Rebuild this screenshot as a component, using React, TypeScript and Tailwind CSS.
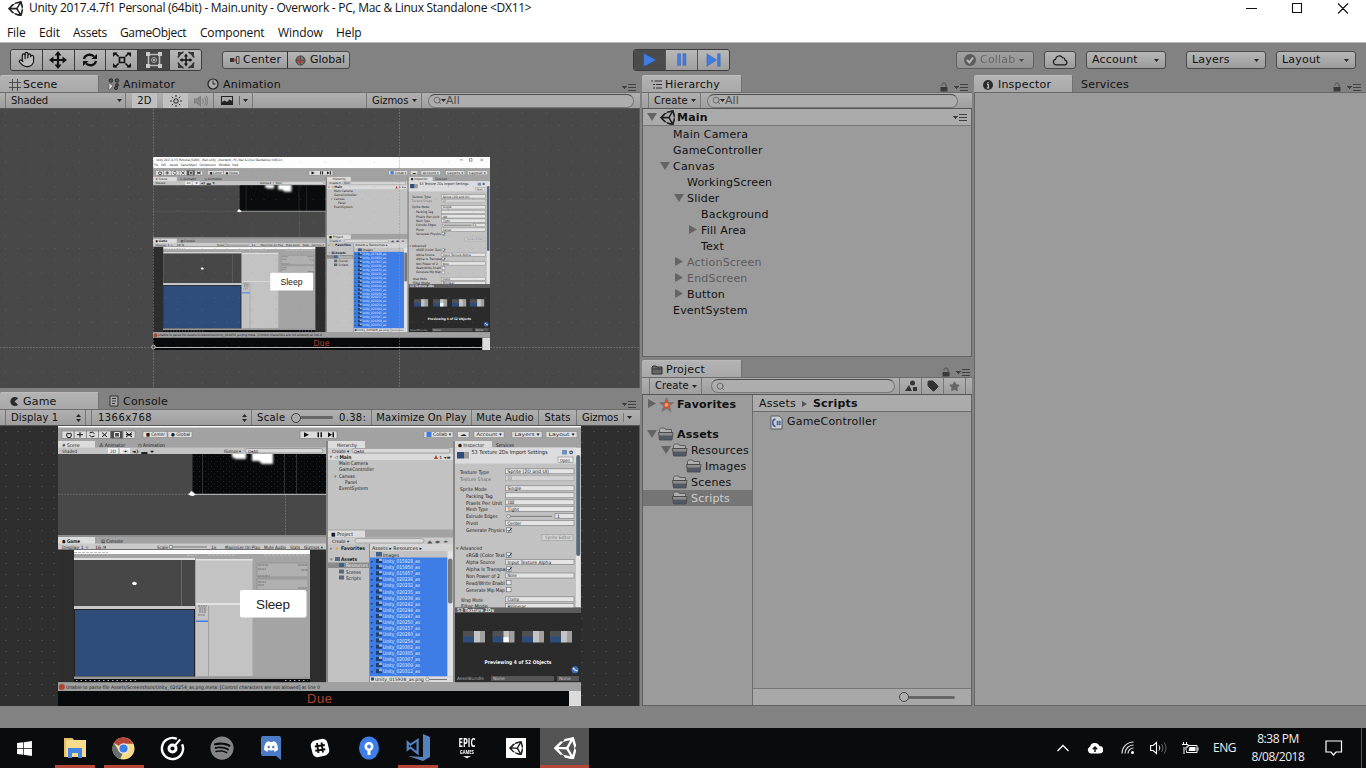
import React from "react";
import { DiUnitySmall } from "react-icons/di";
import { FaWindows, FaSpotify, FaDiscord } from "react-icons/fa";
import { Hand, Cloud, Tag, Star, Search } from "lucide-react";

const mini = { fontFamily: '"DejaVu Sans", sans-serif', letterSpacing: 0 };
const arial = { fontFamily: '"Liberation Sans", sans-serif', letterSpacing: 0 };

/* ---------- picture shown by both the Scene and the Game view ---------- */

type LabelProps = { x: number; y: number; t: string; s?: number; c?: string; w?: number; bold?: boolean };

function L({ x, y, t, s = 5, c = "#1b1b1b", w, bold }: LabelProps) {
  return (
    <text x={x} y={y} fontSize={s} fill={c} fontWeight={bold ? 700 : 400} textLength={w} lengthAdjust="spacingAndGlyphs" dominantBaseline="central" style={mini}>
      {t}
    </text>
  );
}

function R({ x, y, w, h, f, s, r }: { x: number; y: number; w: number; h: number; f: string; s?: string; r?: number }) {
  return <rect x={x} y={y} width={w} height={h} fill={f} stroke={s} strokeWidth={s ? 0.6 : 0} rx={r} />;
}

const files = ["015928", "015950", "015957", "020236", "020232", "020235", "020239", "020242", "020244", "020247", "020250", "020257", "020260", "020254", "020302", "020305", "020307", "020309", "020312"];

const fields: { t: string; y: number; x: number; v?: string; check?: boolean; on?: boolean; dim?: boolean }[] = [
  { t: "Texture Type", y: 471.5, x: 460, v: "Sprite (2D and UI)" },
  { t: "Texture Shape", y: 478.5, x: 460, v: "2D", dim: true },
  { t: "Sprite Mode", y: 488.5, x: 460, v: "Single" },
  { t: "Packing Tag", y: 495.5, x: 466, v: "" },
  { t: "Pixels Per Unit", y: 502.5, x: 466, v: "100" },
  { t: "Mesh Type", y: 509, x: 466, v: "Tight" },
  { t: "Extrude Edges", y: 516, x: 466 },
  { t: "Pivot", y: 523, x: 466, v: "Center" },
  { t: "Generate Physics", y: 530, x: 466, check: true, on: true },
  { t: "sRGB (Color Text", y: 555, x: 466, check: true, on: true },
  { t: "Alpha Source", y: 562, x: 466, v: "Input Texture Alpha" },
  { t: "Alpha Is Transpar", y: 569, x: 466, check: true, on: true },
  { t: "Non Power of 2", y: 575.7, x: 466, v: "None" },
  { t: "Read/Write Enabl", y: 582.5, x: 466, check: true },
  { t: "Generate Mip Map", y: 589.5, x: 466, check: true },
  { t: "Wrap Mode", y: 599.5, x: 461, v: "Clamp" },
  { t: "Filter Mode", y: 606, x: 461, v: "Bilinear" },
];

const miniMenu: [string, number, number][] = [["File", 60, 6], ["Edit", 71, 7], ["Assets", 84, 13], ["GameObject", 101, 25], ["Component", 130, 25], ["Window", 160, 17], ["Help", 181, 9]];

function Picture({ viewBox, className, titled }: { viewBox: string; className: string; titled?: boolean }) {
  return (
    <svg viewBox={viewBox} preserveAspectRatio="none" className={className}>
      <defs>
        <filter id="soft" x="-20%" y="-20%" width="140%" height="140%">
          <feGaussianBlur stdDeviation="1.3" />
        </filter>
        <pattern id="dots" width="6" height="5" patternUnits="userSpaceOnUse">
          <rect x="1" y="1" width="0.8" height="0.8" fill="#33373b" />
          <rect x="4" y="3.5" width="0.8" height="0.8" fill="#282b2e" />
        </pattern>
        <clipPath id="world"><rect x="193" y="454" width="133" height="40" /></clipPath>
      </defs>
      <R x={58} y={410} w={523} h={18} f="#fdfdfd" />
      {titled && (
        <g>
          <L x={63} y={415} t="Unity 2017.4.7f1 Personal (64bit) - Main.unity - Overwork - PC, Mac & Linux Standalone <DX11>" w={196} />
          {miniMenu.map(([t, x, w]) => <L key={t} x={x} y={423} t={t} w={w} />)}
          <path d="M534 414.500h5M549 412.500h4v4h-4zM566 412.500l4 4m0-4l-4 4" stroke="#222" strokeWidth="0.700" fill="none" />
        </g>
      )}
      <R x={58} y={427.500} w={523} h={264} f="#a2a2a2" />
      {[0, 1, 2, 3, 4, 5].map((i) => (
        <R key={i} x={62 + i * 12.200} y={431} w={12} h={7.300} f={i === 4 ? "#4c4c4c" : "#dcdcdc"} s="#777" />
      ))}
      <path d="M66.500 435l1-2 1.500 1 1.500-1 1 2-1 2.500h-3zM77 434.700h6M80 432v5.500M89.500 433l3-1 2 2m0 2l-3 1-2-2M102 432.500l5 4.500m0-4.500l-5 4.500M126 432.500l6 4.500m0-4.500l-6 4.500M126 434.700h6" stroke="#111" strokeWidth="1" fill="none" />
      <path d="M114.500 432.500h5v4.500h-5z" fill="none" stroke="#eee" strokeWidth="1" />
      <R x={143} y={431.500} w={24} h={6} f="#dedede" s="#888" />
      <R x={168} y={431.500} w={24} h={6} f="#dedede" s="#888" />
      <L x={146} y={434.800} t="■ Center" w={19} s={4.800} />
      <L x={171} y={434.800} t="● Global" w={19} s={4.800} />
      <R x={300} y={431} w={37} h={7.500} f="#dcdcdc" s="#777" />
      <path d="M304 432.300l5 2.500-5 2.500zM317.500 432.300h1.500v5h-1.500zM320.500 432.300h1.500v5h-1.500zM328 432.300l4 2.500-4 2.500zM332.500 432.300h1.500v5h-1.500z" fill="#111" />
      {([[424, 29, "Collab ▾"], [457.500, 11.500, "☁"], [474, 30, "Account ▾"], [512, 30, "Layers ▾"], [546, 31, "Layout ▾"]] as [number, number, string][]).map(([x, w, t], i) => (
        <g key={t}>
          <R x={x} y={431.500} w={w} h={6.200} f="#dedede" s="#888" />
          <L x={x + (i === 0 ? 9 : 2.500)} y={434.800} t={t} s={4.800} w={w - (i === 0 ? 11 : 5)} />
        </g>
      ))}
      <R x={426.500} y={432} w={5} h={5} f="#3f7de6" />

      {/* scene */}
      <R x={58} y={441} w={37} h={8} f="#dcdcdc" />
      <L x={62} y={444.500} t="# Scene" w={18} />
      <L x={99} y={444.500} t="⁂ Animator" w={26} />
      <L x={138} y={444.500} t="◷ Animation" w={27} />
      <R x={58} y={447.500} w={268} h={6.500} f="#c4c4c4" />
      <R x={108} y={448} w={10} h={5.500} f="#f0f0f0" />
      <R x={120} y={448} w={10} h={5.500} f="#f0f0f0" />
      <L x={62} y={451} t="Shaded" w={15} s={4.500} />
      <L x={110} y={451} t="2D" w={6} s={4.500} />
      <L x={122} y={451} t="☀  ◂)  ▃ ▾" w={32} s={4.500} />
      <L x={224} y={451} t="Gizmos ▾" w={17} s={4.500} />
      <R x={245} y={448.500} w={78} h={4.500} f="#d8d8d8" s="#777" r={2.200} />
      <L x={248} y={451} t="Q▾All" s={4} />
      <R x={58} y={454} w={268} h={81} f="#484848" />
      <R x={192.500} y={454} w={133.500} h={40} f="#08090a" />
      <R x={192.500} y={454} w={133.500} h={40} f="url(#dots)" />
      <g clipPath="url(#world)">
        <path d="M232 450h14v9h-10l-4-2zM252 450h21v14h-11l-3-3h-7z" fill="#fff" filter="url(#soft)" />
        <path d="M202.500 454v40M284.500 454v40M296.500 454v40" stroke="#3b3e40" strokeWidth="0.800" />
      </g>
      <path d="M192.500 494.300H326" stroke="#c8c8c8" strokeWidth="1" />
      <path d="M58 494.300h134M285.500 495v40" stroke="#777" strokeWidth="0.700" strokeDasharray="2 1" />
      <path d="M188 494l2-1 1-2 2 1 2 2 1 .500-3 1.500-3-.500z" fill="#fff" />
      <R x={58} y={535} w={268} h={2} f="#8e8e8e" />

      {/* game */}
      <R x={58} y={537} w={37} h={7} f="#dcdcdc" />
      <L x={62} y={540.500} t="● Game" w={18} bold />
      <L x={101} y={540.500} t="▤ Console" w={22} />
      <R x={58} y={543.500} w={268} h={6} f="#cacaca" />
      <L x={62} y={547} t="Display 1 ÷" w={27} s={4.500} />
      <L x={95} y={547} t="16:9" w={11} s={4.500} />
      <L x={157} y={547} t="Scale" w={11} s={4.500} />
      <path d="M172 547h35" stroke="#777" />
      <circle cx="171" cy="547" r="1.800" fill="#ddd" stroke="#555" strokeWidth="0.600" />
      <L x={211} y={547} t="1x" s={4.500} />
      <L x={225} y={547} t="Maximize On Play" w={35} s={4.500} />
      <L x={264} y={547} t="Mute Audio" w={22} s={4.500} />
      <L x={290} y={547} t="Stats" w={10} s={4.500} />
      <L x={304} y={547} t="Gizmos ▾" w={19} s={4.500} />
      <R x={58} y={549.500} w={268} h={133} f="#2d2d2e" />
      <R x={74} y={550} w={236} h={4} f="#fbfbfb" />
      <R x={74} y={554} w={236} h={126} f="#a4a4a4" />
      <path d="M74 552.500h34M208 555h28M187 555.500h10M264 555h44" stroke="#bbb" strokeWidth="1.200" strokeDasharray="3 1" />
      <R x={74} y={558} w={121} h={2} f="#e0e0e0" />
      <R x={74} y={560} w={121} h={46} f="#474747" />
      <path d="M181.500 560v46" stroke="#777" strokeWidth="0.700" />
      <path d="M132 583l2-1.500 3 1.500-1 2h-3z" fill="#fff" />
      <R x={74} y={606} w={121} h={3} f="#c9c9c9" />
      <R x={74} y={609} w={121} h={68} f="#222" />
      <R x={75} y={610} w={119} h={66} f="#2f4d7b" />
      <R x={196} y={559} w={56.500} h={44} f="#c3c3c3" />
      <R x={196} y={559} w={56.500} h={1.500} f="#e2e2e2" />
      <R x={196} y={603} w={56.500} h={2} f="#e2e2e2" />
      <R x={196} y={605} w={56.500} h={71} f="#c3c3c3" />
      <path d="M208.500 606v70" stroke="#888" strokeWidth="0.600" />
      <path d="M198 606h9m-8 2h7m-7 2h8m-8 2h7m-8 3h7" stroke="#666" strokeWidth="0.800" strokeDasharray="2 0.500" />
      <R x={196} y={620.500} w={12} h={1.500} f="#3f7de6" />
      <path d="M257 563h51v14h-51zM257 579h51v11h-51z" stroke="#888" strokeWidth="0.600" fill="#b0b0b0" />
      <path d="M258 565h10m-10 4h8m-8 7h12m28-11h9m-6 5h7M258 582h8m-8 3h6m34 3h9" stroke="#777" strokeWidth="1" strokeDasharray="3 0.500" />
      <R x={74} y={676.500} w={236} h={2.500} f="#999" />
      <R x={74} y={679} w={236} h={3.500} f="#0a0b0d" />
      <path d="M76 680.500h62M285 680.500h23" stroke="#aab" strokeWidth="1" strokeDasharray="1.500 3" />

      {/* hierarchy */}
      <R x={326} y={441} w={2} h={241} f="#868686" />
      <R x={328} y={441} w={37} h={8} f="#dcdcdc" />
      <L x={337} y={444.500} t="Hierarchy" w={20} />
      <R x={328} y={448} w={125} h={6} f="#cacaca" />
      <L x={332} y={451} t="Create ▾" w={17} s={4.500} />
      <R x={352} y={448.500} w={98} h={4.500} f="#d8d8d8" s="#888" r={2.200} />
      <L x={354} y={451} t="Q▾All" s={4} />
      <R x={328} y={454} w={125} h={75.500} f="#c2c2c2" />
      <R x={328} y={454} w={125} h={6} f="#dadada" />
      <L x={329.500} y={457} t="▼" s={3.500} c="#777" />
      <L x={334.500} y={457} t="◁ Main" w={17} bold />
      <path d="M434 459l2-4 2 4z" fill="#b0432f" />
      <L x={439} y={457} t="1  ▾≡" w={12} s={4} />
      <L x={339} y={463.300} t="Main Camera" w={29} />
      <L x={339} y={469.400} t="GameController" w={35} />
      <L x={334} y={475.500} t="▾" s={5} c="#777" />
      <L x={339} y={475.500} t="Canvas" w={16} />
      <L x={345} y={481.600} t="Panel" w={12} />
      <L x={339} y={487.800} t="EventSystem" w={29} />

      {/* project */}
      <R x={328} y={530.500} w={37} h={7} f="#dcdcdc" />
      <L x={331} y={534} t="■ Project" w={22} />
      <R x={328} y={537.500} w={125} h={6.500} f="#cacaca" />
      <L x={332} y={541} t="Create ▾" w={17} s={4.500} />
      <R x={355} y={538.500} w={69} h={4.500} f="#d8d8d8" s="#888" r={2.200} />
      <L x={427} y={541} t="▲  ◆  ★" w={22} s={4} c="#555" />
      <R x={328} y={544} w={125} h={138} f="#c2c2c2" />
      <L x={330} y={547.500} t="▸" c="#777" />
      <L x={335} y={547.500} t="★" c="#d8a83c" />
      <L x={341} y={547.500} t="Favorites" w={24} bold />
      <L x={330} y={559.300} t="▾" c="#777" />
      <R x={335} y={557} w={5} h={4} f="#58697e" />
      <L x={341} y={559.300} t="Assets" w={16} bold />
      <R x={328} y={562.500} w={41} h={5.500} f="#8a8a8a" />
      <R x={339} y={563} w={5} h={4} f="#40608c" />
      <L x={346} y={565.300} t="Resources" w={22} c="#eee" />
      <R x={339} y={569.500} w={5} h={4} f="#58697e" />
      <L x={346} y={571.500} t="Scenes" w={15} />
      <R x={339} y={575.500} w={5} h={4} f="#58697e" />
      <L x={346} y={577.500} t="Scripts" w={15} />
      <path d="M369.500 544v138" stroke="#777" strokeWidth="0.700" />
      <R x={370} y={544} w={83} h={7} f="#d4d4d4" />
      <L x={372} y={547.500} t="Assets ▸ Resources ▸" w={50} />
      <R x={376} y={552} w={6} h={4.500} f="#40608c" />
      <L x={383} y={554.500} t="Images" w={16} />
      <R x={370} y={557.500} w={77.500} h={119} f="#3f7de6" />
      {files.map((n, i) => (
        <g key={n}>
          <L x={371} y={561 + i * 6.120} t="▸" s={4.500} c="#1d3f7c" />
          <R x={376} y={559 + i * 6.120} w={6} h={4} f="#22406c" />
          <R x={379} y={558.500 + i * 6.120} w={3} h={2.500} f="#a8b4c4" />
          <L x={383} y={561 + i * 6.120} t={`Unity_${n}_as`} w={37} c="#e8f0ff" />
        </g>
      ))}
      <R x={447.500} y={551} w={5.500} h={125.500} f="#e2e2e2" />
      <R x={448} y={558.500} w={4.500} h={45} f="#777" r={2} />
      <R x={370} y={676.500} w={83} h={5.500} f="#dcdcdc" />
      <R x={371} y={677.500} w={3} h={3} f="#2f4d7b" />
      <L x={375} y={679.500} t="Unity_015928_as.png" w={49} s={4.500} />
      <path d="M428 679.500h19" stroke="#777" />
      <circle cx="427.500" cy="679.300" r="1.800" fill="#ddd" stroke="#555" strokeWidth="0.500" />

      {/* inspector */}
      <R x={453} y={441} w={2} h={241} f="#868686" />
      <R x={455} y={441} w={37} h={8} f="#dcdcdc" />
      <L x={458} y={444.500} t="● Inspector" w={26} />
      <L x={496} y={444.500} t="Services" w={18} />
      <R x={455} y={447.500} w={126} h={160} f="#c2c2c2" />
      <R x={455} y={447.500} w={121} h={16} f="#dcdcdf" />
      <R x={457} y={452} w={7} h={6.500} f="#2f4d7b" />
      <R x={464} y={452} w={5} h={6.500} f="#9a9a9a" />
      <L x={471.500} y={452} t="53 Texture 2Ds Import Settings" w={76} s={5.500} />
      <R x={562} y={450} w={5} h={4.500} f="#708fb8" />
      <L x={569} y={452} t="✿" s={5} />
      <R x={558} y={457} w={15} h={5.500} f="#ececec" s="#888" />
      <L x={560} y={460} t="Open" w={10} s={4.500} />
      {fields.map((f) => (
        <g key={f.t} opacity={f.dim ? 0.5 : 1}>
          <L x={f.x} y={f.y} t={f.t} w={f.t.length * 2.420} />
          {f.v !== undefined && <R x={505.500} y={f.y - 2.700} w={68.500} h={5} f="#e4e4e4" s="#777" />}
          {f.v ? <L x={507.500} y={f.y} t={f.v} s={4.600} w={f.v.length * 2.300} /> : null}
          {f.check && <R x={506.500} y={f.y - 2.200} w={4.500} h={4.500} f="#eee" s="#666" />}
          {f.on && <path d={`M507.500 ${f.y}l1.500 1.500 2.500-3.500`} stroke="#152c4c" strokeWidth="1" fill="none" />}
        </g>
      ))}
      <path d="M510 516.300h42" stroke="#777" strokeWidth="1" />
      <circle cx="508.500" cy="516.300" r="1.800" fill="#ddd" stroke="#555" strokeWidth="0.500" />
      <R x={555} y={513.500} w={19} h={5} f="#e4e4e4" s="#777" />
      <L x={557} y={516} t="1" s={4.500} />
      <R x={542} y={534.500} w={31} h={6} f="#d2d2d2" s="#999" />
      <L x={545} y={537.700} t="Sprite Editor" w={26} s={4.500} c="#777" />
      <L x={456} y={548.300} t="▾" c="#666" />
      <L x={460} y={548.300} t="Advanced" w={22} />
      <R x={576} y={448} w={4.500} h={159} f="#e4e4e4" />
      <R x={576.200} y={455} w={4} h={101} f="#58687c" r={2} />
      <R x={455} y={607.500} w={126} h={5.500} f="#5c5c5c" />
      <L x={457} y={610.300} t="53 Texture 2Ds" w={37} c="#e4e4e4" bold />
      <R x={455} y={613} w={126} h={69.500} f="#2b2b2b" />
      {[463, 492.500, 522, 550].map((x, i) => (
        <g key={x}>
          <R x={x} y={631} w={12} h={6} f="#505050" />
          <R x={x} y={636.500} w={12} h={6} f="#2f4d7b" />
          <R x={x + 11} y={631} w={6} h={11.500} f="#c4c4c4" />
          <R x={x + 17} y={631} w={5} h={11.500} f="#a0a0a0" />
          {i === 1 && <R x={x + 11} y={637} w={5} h={5} f="#fff" />}
        </g>
      ))}
      <L x={484.500} y={661.800} t="Previewing 4 of 52 Objects" w={67} c="#f4f4f4" bold />
      <circle cx="575" cy="669.800" r="3.500" fill="#3f6fc0" />
      <path d="M573 668l2 2 2.500 1" stroke="#fff" strokeWidth="1.300" />
      <L x={457} y={678.700} t="AssetBundle" w={27} s={4.500} c="#aaa" />
      <R x={491} y={676} w={63} h={5} f="#555" />
      <L x={493} y={678.700} t="None" s={4.500} c="#ccc" />
      <R x={557} y={676} w={22} h={5} f="#555" />
      <L x={559} y={678.700} t="None" s={4.500} c="#ccc" />

      {/* status line and slider */}
      <R x={58} y={682.300} w={523} h={9} f="#a0a0a0" />
      <circle cx="61.800" cy="687" r="3" fill="#b0432f" />
      <L x={66} y={687.200} t="Unable to parse file Assets/Screenshots/Unity_020254_as.png.meta: [Control characters are not allowed] at line 0" w={254} s={4.800} />
      <R x={58} y={691} w={523} h={19} f="#08090a" />
      <R x={569} y={691} w={12} h={19} f="#dcdcdc" />
      <text x="307" y="698.800" fontSize="13" fill="#b0432f" dominantBaseline="central" style={arial} textLength="25">Due</text>
      <R x={240} y={590} w={66.500} h={27.500} f="#fff" r={2} />
      <text x="256" y="604" fontSize="13.500" fill="#222" dominantBaseline="central" style={arial} textLength="34">Sleep</text>
    </svg>
  );
}

/* ---------- small shared parts ---------- */

const Caret = ({ className = "" }: { className?: string }) => (
  <svg viewBox="0 0 5 3" className={`h-[3px] w-[5px] shrink-0 ${className}`}><path d="M0 0h5L2.500 3z" fill="#262626" /></svg>
);

const UpDown = () => (
  <svg viewBox="0 0 5 8" className="h-2 w-[5px] shrink-0"><path d="M0 3h5L2.500 0zM0 5h5L2.500 8z" fill="#262626" /></svg>
);

const Menu = ({ className = "" }: { className?: string }) => (
  <svg viewBox="0 0 14 7" className={`h-[7px] w-[14px] shrink-0 ${className}`} shapeRendering="crispEdges">
    <path d="M0 2h5L2.500 5z" fill="#404040" />
    <path d="M6 .5h8M6 3.500h8M6 6.500h8" stroke="#404040" strokeWidth="1" />
  </svg>
);

const Lock = () => (
  <svg viewBox="0 0 8 10" className="h-[10px] w-2 shrink-0">
    <path d="M.5 5h7v4.500h-7z" fill="#3a3a3a" />
    <path d="M2 3.500V2.500C2 .5 6 .5 6 2.500V5" fill="none" stroke="#4c4c4c" />
  </svg>
);

const Unity = ({ className }: { className: string }) => <DiUnitySmall className={className} viewBox="5 5 22 22" />;

const Sep = () => <div className="h-full w-px shrink-0 bg-[#777]" />;

const bar = "flex shrink-0 items-center border-t border-b border-t-[#6b6b6b] border-b-[#555] bg-linear-to-b from-[#b0b0b0] to-[#9e9e9e] text-[10px] tracking-[0.1px]";
const tab = "flex h-[17px] items-center rounded-t-[2px] border-r border-t border-[#727272] border-t-[#bcbcbc] bg-linear-to-b from-[#b3b3b3] to-[#a8a8a8] pt-px";
const button = "flex shrink-0 items-center rounded-[3px] border border-[#4a4a4a] bg-linear-to-b from-[#b6b6b6] to-[#9c9c9c] pt-px";

function SearchField({ className, text = "All", arrow = true }: { className: string; text?: string; arrow?: boolean }) {
  return (
    <div className={`flex h-[14px] shrink-0 items-center rounded-full border border-[#787878] border-t-[#4a4a4a] bg-[#adadad] pl-1 text-[11px] leading-none text-[#4c4c4c] ${className}`}>
      <Search className="size-[9px] text-[#666]" strokeWidth={2.500} />
      {arrow && <Caret className="-ml-px" />}
      <span>{text}</span>
    </div>
  );
}

/* ---------- top bars ---------- */

function ToolIcon({ i }: { i: number }) {
  if (i === 0) return <Hand className="size-[17px] fill-[#bdbdbd]" strokeWidth={1.600} />;
  const c = "size-[18px]";
  if (i === 1)
    return (
      <svg viewBox="0 0 18 18" className={c}><path d="M9 0l3.500 4.500h-7zM9 18l3.500-4.500h-7zM0 9l4.500-3.500v7zM18 9l-4.500-3.500v7z" fill="#111" /><path d="M9 3v12M3 9h12" stroke="#111" strokeWidth="2.200" /></svg>
    );
  if (i === 2)
    return (
      <svg viewBox="0 0 18 18" className={c}><path d="M3 8C4 3.500 9.500 2.500 13 5.500M15 10C14 14.500 8.500 15.500 5 12.500" stroke="#111" strokeWidth="2.300" fill="none" /><path d="M16 3v5h-5.500zM2 15v-5h5.500z" fill="#111" /></svg>
    );
  if (i === 3)
    return (
      <svg viewBox="0 0 18 18" className={c}><path d="M6.500 6.500h5v5h-5zM2 2l3.500 3.500M16 2l-3.500 3.500M2 16l3.500-3.500M16 16l-3.500-3.500" stroke="#111" strokeWidth="1.700" fill="none" /><path d="M0 1.500h4.500L0 6zM18 1.500h-4.500L18 6zM0 16.500h4.500L0 12zM18 16.500h-4.500L18 12z" fill="#111" /></svg>
    );
  if (i === 4)
    return (
      <svg viewBox="0 0 18 18" className={c}><path d="M3.500 3.500h11v11h-11z" stroke="#bbb" strokeWidth="1.600" fill="none" /><path d="M1 1h4v4H1zM13 1h4v4h-4zM1 13h4v4H1zM13 13h4v4h-4z" fill="#c9c9c9" /><circle cx="9" cy="9" r="2.500" fill="none" stroke="#aaa" /><circle cx="9" cy="9" r="1" fill="#ddd" /></svg>
    );
  return (
    <svg viewBox="0 0 18 18" className={c}>
      <path d="M9 2.500l2 3H7zM9 15.500l2-3H7zM2.500 9l3-2v4zM15.500 9l-3-2v4z" fill="#111" />
      <path d="M9 5v8M5 9h8" stroke="#111" strokeWidth="1.500" />
      <path d="M1 6.500C2 4 4 2 6.500 1M11.500 1C14 2 16 4 17 6.500M17 11.500C16 14 14 16 11.500 17M6.500 17C4 16 2 14 1 11.500" stroke="#333" strokeWidth="1.700" fill="none" />
      <path d="M1 1h3.500L1 4.500zM17 1h-3.500L17 4.500zM1 17h3.500L1 13.500zM17 17h-3.500l3.500-3.500z" fill="#333" />
    </svg>
  );
}

function TopBars() {
  return (
    <header className="shrink-0">
      <div className="flex h-[42px] flex-col bg-white font-['Open_Sans','Noto_Sans',sans-serif] text-[12px] text-[#111]">
        <div className="flex h-4 items-center pl-[8px]">
          <Unity className="size-[15px] shrink-0 text-[#222]" />
          <span className="ml-[6px] tracking-[-0.27px] whitespace-nowrap">Unity 2017.4.7f1 Personal (64bit) - Main.unity - Overwork - PC, Mac &amp; Linux Standalone &lt;DX11&gt;</span>
          <svg viewBox="0 0 104 12" className="mr-[16px] ml-auto h-3 w-[104px]"><path d="M0 6.500h11M46.500 1.500h9v9h-9zM92 1.500l10 10M102 1.500l-10 10" fill="none" stroke="#111" strokeWidth="1.100" /></svg>
        </div>
        <nav className="mt-2 flex h-[18px] items-center pl-[7px] tracking-[-0.1px]">
          <span className="w-8">File</span><span className="w-[34px]">Edit</span><span className="w-[47px] tracking-[-0.3px]">Assets</span><span className="w-20 tracking-[-0.35px]">GameObject</span>
          <span className="w-[78px] tracking-[-0.2px]">Component</span><span className="w-[58px]">Window</span><span>Help</span>
        </nav>
      </div>
      <div className="flex h-[34px] items-center border-t border-[#b8b8b8] bg-[#828282] pl-[10px]">
        <div className="flex h-[22px] w-[192px] overflow-hidden rounded-[3px] border border-[#3c3c3c]">
          {[0, 1, 2, 3, 4, 5].map((i) => (
            <div key={i} className={`flex flex-1 items-center justify-center ${i === 4 ? "bg-[#464646]" : "bg-linear-to-b from-[#b8b8b8] to-[#a0a0a0]"} ${i > 0 ? "border-l border-[#3c3c3c]" : ""}`}><ToolIcon i={i} /></div>
          ))}
        </div>
        <div className={`${button} ml-5 h-[18px] w-[128px]`}>
          <div className="-mt-px flex h-[17px] w-[65px] items-center border-r border-[#333] pt-px pl-[7px]">
            <svg viewBox="0 0 10 8" className="mr-[3px] h-2 w-[10px]"><path d="M0 2h4v4H0z" fill="#333" /><path d="M9 .5H6.500v7H9z" fill="none" stroke="#444" /><circle cx="5" cy="4" r="1.500" fill="#b0432f" /></svg>
            Center
          </div>
          <div className="flex h-full items-center pl-[7px]">
            <svg viewBox="0 0 12 12" className="mr-1 size-[11px]"><circle cx="6" cy="6" r="5" fill="#777" stroke="#444" /><path d="M6 1v10M1 6h10M3 2.500c-1.500 3-1.500 5 0 7M9 2.500c1.500 3 1.500 5 0 7" stroke="#444" fill="none" strokeWidth=".8" /><path d="M4 3v5h5" stroke="#b0432f" fill="none" strokeWidth="1.300" /></svg>
            <span className="tracking-normal">Global</span>
          </div>
        </div>
        <div className="ml-[283px] flex h-[22px] w-[97px] overflow-hidden rounded-[3px] border border-[#3c3c3c]">
          {["M2 1.500l14 7.500L2 16.500z", "M4 2h3.500v13H4zM10 2h3.500v13H10z", "M1 2l11 7L1 16zM13 2h3v14h-3z"].map((d, i) => (
            <div key={i} className={`flex flex-1 items-center justify-center ${i === 0 ? "bg-[#4b4b4b]" : "border-l border-[#555] bg-linear-to-b from-[#b8b8b8] to-[#a0a0a0]"}`}>
              <svg viewBox="0 0 18 18" className="size-4"><path d={d} fill="#3f7de6" /><path d={d} fill="none" stroke="#2c4f8d" strokeWidth=".4" /></svg>
            </div>
          ))}
        </div>
        <div className={`${button} ml-[226px] h-[18px] w-[78px] pl-[7px] text-[#555] opacity-60`}>
          <svg viewBox="0 0 12 12" className="mr-1 size-3"><circle cx="6" cy="6" r="6" fill="#444" /><path d="M3 6l2.500 2.500L9 3.500" stroke="#ddd" strokeWidth="2" fill="none" /></svg>
          Collab<Caret className="ml-1" />
        </div>
        <div className={`${button} ml-[10px] h-[18px] w-8 justify-center border-[#2f2f2f]`}>
          <svg viewBox="0 0 16 12" className="mb-px h-3 w-4"><path d="M4 10.800A2.800 2.800 0 0 1 3.500 5.300C4 2 8.500 .2 10.700 3.800 12 3.500 12.800 4.500 12.700 5.800 15.800 6.500 15.500 10.800 12.800 10.800z" fill="none" stroke="#1a1a1a" strokeWidth="1.200" /></svg>
        </div>
        {[["Account", "ml-[10px] w-[80px]"], ["Layers", "ml-5 w-[80px]"], ["Layout", "ml-[10px] w-[80px]"]].map(([t, c]) => (
          <div key={t} className={`${button} ${c} h-[18px] justify-between pr-[6px] pl-[5px]`}><span>{t}</span><Caret /></div>
        ))}
      </div>
    </header>
  );
}

/* ---------- panels ---------- */

function SceneView() {
  return (
    <section className="flex h-[312px] flex-col">
      <div className="flex h-4 shrink-0 items-end">
        <div className={`${tab} w-[99px] pl-[9px]`}>
          <svg viewBox="0 0 12 12" className="mr-[2px] size-3"><path d="M3.500 0v12M8.500 0v12M0 3.500h12M0 8.500h12" stroke="#444" strokeWidth=".9" /></svg>Scene
        </div>
        <svg viewBox="0 0 12 12" className="mb-[2px] ml-[9px] size-3"><g fill="#555" stroke="#222" strokeWidth=".8"><circle cx="3" cy="2.500" r="1.800" /><circle cx="9" cy="2.500" r="1.800" /><circle cx="9" cy="7" r="1.500" /><circle cx="8" cy="10" r="1.500" /></g><path d="M1 5v7l4-4z" fill="#ddd" stroke="#555" strokeWidth=".6" /></svg>
        <span className="-mb-px ml-[3px] w-[84px]">Animator</span>
        <svg viewBox="0 0 12 12" className="mb-[2px] size-3"><circle cx="6" cy="6" r="5" fill="#aaa" stroke="#222" strokeWidth="1.200" /><path d="M6 2.500V6h2.500" stroke="#222" fill="none" /></svg>
        <span className="-mb-px ml-1">Animation</span>
        <Menu className="mr-[4px] mb-px ml-auto" />
      </div>
      <div className={`${bar} h-[17px]`}>
        <div className="ml-[5px] flex h-full w-[121px] shrink-0 items-center justify-between border-r border-l border-[#777] pr-[3px] pl-[5px]"><span className="tracking-[-0.1px]">Shaded</span><Caret /></div>
        <span className="ml-[6px] flex h-full w-[25px] items-center justify-center bg-[#c0c0c0]">2D</span>
        <span className="ml-[6px] flex h-full w-[25px] items-center justify-center bg-[#c0c0c0]">
          <svg viewBox="0 0 12 12" className="size-3"><circle cx="6" cy="6" r="2.200" fill="none" stroke="#222" /><path d="M6 0v2M6 10v2M0 6h2M10 6h2M1.800 1.800l1.400 1.400M8.800 8.800l1.400 1.400M10.200 1.800L8.800 3.200M3.200 8.800l-1.400 1.400" stroke="#222" /></svg>
        </span>
        <svg viewBox="0 0 14 12" className="ml-[6px] h-3 w-[14px]"><path d="M0 4h3l3.500-3v10L3 8H0z" fill="#888" stroke="#666" strokeWidth=".5" /><path d="M8.500 3.500c1 1.500 1 3.500 0 5M10.500 2c2 2.500 2 5.500 0 8M12 .8c2.500 3 2.500 7 0 10" fill="none" stroke="#777" /></svg>
        <div className="ml-[5px] h-full"><Sep /></div>
        <svg viewBox="0 0 12 9" className="ml-[7px] h-[9px] w-3"><path d="M0 0h12v9H0z" fill="#222" /><path d="M1 1h10v4L8.500 3.500 6 6 3.500 4.500 1 6z" fill="#aaa" /></svg>
        <span className="ml-[6px] flex h-[9px] items-center border-l border-[#666] pl-[3px]"><Caret /></span>
        <div className="ml-1 h-full"><Sep /></div>
        <div className="ml-[113px] flex h-full w-[56px] items-center justify-between border-r border-l border-[#777] pr-1 pl-[5px]"><span className="tracking-[-0.1px]">Gizmos</span><Caret /></div>
        <SearchField className="ml-[6px] w-[206px]" />
      </div>
      <div className="relative h-[279px] overflow-hidden border-r border-[#5c5c5c] bg-[#484848]">
        <Picture titled viewBox="58 410 523 300" className="mt-[48px] ml-[153px] block h-[193px] w-[337px]" />
        <svg viewBox="0 0 640 279" className="absolute inset-0 h-[279px] w-[640px]">
          <defs>
            <pattern id="grid" width="24.600" height="24.600" x="5" y="16" patternUnits="userSpaceOnUse"><path d="M0 .5h1M0 12.500h1M12.500 .5h1" stroke="#8a8a8a" strokeOpacity=".35" /></pattern>
          </defs>
          <rect width="640" height="279" fill="url(#grid)" />
          <path d="M153.500 0v279M399.500 0v279M0 238.500h153M490 238.500h150" stroke="#999" strokeOpacity=".4" strokeDasharray="2 1" />
          <path d="M153 238.500h329" stroke="#b5b5b5" strokeWidth="1" />
          <circle cx="153.500" cy="238" r="1.800" fill="#555" stroke="#bbb" />
        </svg>
      </div>
    </section>
  );
}

function GameView() {
  return (
    <section className="mt-1 flex h-[314px] flex-col">
      <div className="flex h-[17px] shrink-0 items-end">
        <div className={`${tab} w-[99px] pl-[9px]`}>
          <svg viewBox="0 0 12 12" className="mr-[3px] size-[11px]"><path d="M10 2.500A5 5 0 1 0 10 9.500L6 6z" fill="#2b2b2b" /></svg>Game
        </div>
        <svg viewBox="0 0 10 12" className="mb-[2px] ml-[10px] h-3 w-[10px]"><path d="M1 1h8v10H1zM3 3.500h4M3 6h4M3 8.500h3" fill="#aaa" stroke="#333" /></svg>
        <span className="-mb-px ml-[4px]">Console</span>
        <Menu className="mr-[4px] mb-px ml-auto" />
      </div>
      <div className={`${bar} h-[17px]`}>
        <div className="ml-[5px] flex h-full w-[81px] shrink-0 items-center justify-between border-r border-l border-[#777] pr-1 pl-[5px]">Display 1<UpDown /></div>
        <div className="ml-[5px] flex h-full w-[161px] shrink-0 items-center justify-between border-r border-l border-[#777] pr-1 pl-[6px]"><span className="tracking-[0.45px]">1366x768</span><UpDown /></div>
        <span className="ml-[5px] w-[34px] tracking-[0.3px]">Scale</span>
        <span className="flex w-[42px] items-center"><i className="size-[10px] rounded-full border border-[#444] bg-[#aaa]" /><i className="h-[3px] flex-1 rounded-r bg-[#666]" /></span>
        <span className="ml-[6px] w-[32px] tracking-[0.3px]">0.38:</span>
        <Sep /><span className="w-[99px] text-center whitespace-nowrap">Maximize On Play</span>
        <Sep /><span className="w-[66px] text-center whitespace-nowrap">Mute Audio</span>
        <Sep /><span className="w-[37px] text-center">Stats</span>
        <Sep /><span className="w-[46px] pl-[5px] tracking-[-0.1px]">Gizmos</span>
        <span className="flex h-[9px] items-center border-l border-[#777] pl-[3px]"><Caret /></span>
      </div>
      <div className="h-[280px] border-r border-[#5c5c5c] bg-[#2e2e2e] bg-[radial-gradient(#454545_0.6px,transparent_0.8px)] [background-size:12px_11px]">
        <Picture viewBox="58 426 523 280" className="ml-[58px] block h-[280px] w-[523px]" />
      </div>
    </section>
  );
}

const Arrow = ({ open, tight }: { open?: boolean; tight?: boolean }) => (
  <svg viewBox="0 0 10 10" className={`size-[10px] shrink-0 ${tight ? "mr-px" : "mr-1"}`}>
    <path d={open ? "M0 1h10L5 9z" : "M1 0v9l8-4.500z"} fill="#646464" />
  </svg>
);

const nodes: [string, string, string, string][] = [
  ["Main Camera", "pl-[30px]", "", ""],
  ["GameController", "pl-[30px]", "", ""],
  ["Canvas", "pl-[17px]", "open", ""],
  ["WorkingScreen", "pl-[44px]", "", ""],
  ["Slider", "pl-[31px]", "open", ""],
  ["Background", "pl-[58px]", "", ""],
  ["Fill Area", "pl-[45px]", "closed", ""],
  ["Text", "pl-[58px]", "", ""],
  ["ActionScreen", "pl-[31px]", "closed", "text-[#5c5c5c]"],
  ["EndScreen", "pl-[31px]", "closed", "text-[#5c5c5c]"],
  ["Button", "pl-[31px]", "closed", ""],
  ["EventSystem", "pl-[30px]", "", ""],
];

function Hierarchy() {
  return (
    <section className="flex h-[281px] flex-col">
      <div className="flex h-4 shrink-0 items-end">
        <div className={`${tab} w-[100px] pl-[9px]`}>
          <svg viewBox="0 0 11 9" className="mr-[3px] h-[9px] w-[11px]"><path d="M0 1h2M3.500 1H11M2 4.500h2M5 4.500h6M2 8h2M5 8h6" stroke="#333" strokeWidth="1.200" /></svg>Hierarchy
        </div>
        <div className="mr-[4px] ml-auto flex items-center gap-[6px]"><Lock /><Menu /></div>
      </div>
      <div className={`${bar} h-[17px]`}>
        <div className="ml-[6px] flex h-full w-[53px] shrink-0 items-center justify-between border-r border-l border-[#777] pr-1 pl-[5px]">Create<Caret /></div>
        <SearchField className="ml-[6px] w-[251px]" />
      </div>
      <div className="flex min-h-0 flex-1 flex-col border border-t-0 border-[#626262] bg-[#9b9b9b]">
        <div className="flex h-[17px] shrink-0 items-center border-b border-[#777] bg-[#ababab] pl-1 font-bold">
          <Arrow open /><Unity className="mr-[2px] -ml-px size-[15px] text-[#222]" /><span className="pt-[2px]">Main</span><Menu className="mr-[4px] ml-auto" />
        </div>
        {nodes.map(([t, pad, arrow, color]) => (
          <div key={t} className={`flex h-4 shrink-0 items-center whitespace-nowrap ${pad} ${color}`}>
            {arrow && <Arrow open={arrow === "open"} />}
            <span className={`pt-[2px] ${arrow ? "-ml-px" : ""}`}>{t}</span>
          </div>
        ))}
      </div>
    </section>
  );
}

const Folder = () => (
  <svg viewBox="0 0 16 14" className="mr-[3px] h-[14px] w-4 shrink-0">
    <path d="M1.500 2.500l1-1.500h4l1 1.500h6v3h-12z" fill="#b0b0b0" stroke="#5c5c5c" />
    <path d="M.5 5.500h14.500l-1 7.500h-12.500z" fill="#55595c" stroke="#484848" strokeWidth=".8" />
    <path d="M1 6h13.500l-.5 2.500H1.500z" fill="#8e8e8e" />
    <path d="M2 11.500h11" stroke="#475a74" />
  </svg>
);

function TreeRow({ t, pad, open, cls = "" }: { t: string; pad: string; open?: boolean; cls?: string }) {
  return (
    <div className={`flex h-4 items-center ${pad} ${cls}`}>
      {open && <Arrow open tight />}
      <Folder />
      <span className="pt-[2px]">{t}</span>
    </div>
  );
}

function Project() {
  return (
    <section className="mt-[3px] flex h-[346px] flex-col">
      <div className="flex h-[17px] shrink-0 items-end">
        <div className={`${tab} w-[100px] pl-[9px]`}>
          <svg viewBox="0 0 12 10" className="mr-[3px] h-[10px] w-3"><path d="M1 2l1-1h3l1 1h5v7H1z" fill="#666" stroke="#333" /><path d="M1 4h10" stroke="#333" /></svg>Project
        </div>
        <div className="mr-[2px] ml-auto flex items-center gap-[6px]"><Lock /><Menu /></div>
      </div>
      <div className={`${bar} h-[18px]`}>
        <div className="ml-[7px] flex h-full w-[53px] shrink-0 items-center justify-between border-r border-l border-[#777] pr-1 pl-[5px]">Create<Caret /></div>
        <SearchField className="mr-[4px] ml-[9px] w-[184px]" text="" arrow={false} />
        <Sep />
        <span className="flex w-[21px] justify-center"><svg viewBox="0 0 12 12" className="size-3"><circle cx="7.500" cy="3" r="2.500" fill="#333" /><path d="M0 11l4-6 3 6zM8 7h4v4H8z" fill="#333" /></svg></span>
        <Sep />
        <span className="flex w-[21px] justify-center"><Tag className="size-3 fill-[#333] text-[#333]" /></span>
        <Sep />
        <span className="flex w-[21px] justify-center"><Star className="size-[11px] fill-[#666] text-[#666]" /></span>
        <Sep />
      </div>
      <div className="flex min-h-0 flex-1 border border-t-0 border-[#626262] bg-[#9b9b9b]">
        <div className="w-[110px] shrink-0 border-r border-[#6b6b6b]">
          <div className="flex h-[17px] items-center pt-px pl-1 font-bold"><Arrow tight />
            <svg viewBox="0 0 16 16" className="mr-[3px] ml-[1px] size-[15px]"><path d="M8 1l2 5h5l-4 3.500 1.500 5.500L8 12l-4.500 3L5 9.500 1 6h5z" fill="#d0502f" stroke="#777" strokeWidth="1.200" /><circle cx="8" cy="8.500" r="2" fill="#f0a080" /></svg>
            <span className="pt-[2px]">Favorites</span>
          </div>
          <div className="h-[14px]" />
          <TreeRow t="Assets" pad="pl-1" open cls="font-bold" />
          <TreeRow t="Resources" pad="pl-[18px]" open />
          <TreeRow t="Images" pad="pl-[43px]" />
          <TreeRow t="Scenes" pad="pl-[29px]" />
          <TreeRow t="Scripts" pad="pl-[29px]" cls="bg-[#757575] text-[#cfcfcf]" />
        </div>
        <div className="flex flex-1 flex-col">
          <div className="flex h-[17px] items-center border-b border-[#6b6b6b] bg-[#ababab] pt-px pl-[6px]">
            Assets<svg viewBox="0 0 5 6" className="mx-[6px] h-[6px] w-[5px]"><path d="M0 0v6l5-3z" fill="#555" /></svg><b>Scripts</b>
          </div>
          <div className="flex h-[20px] items-center pl-[17px]">
            <svg viewBox="0 0 14 16" className="mr-1 h-[15px] w-[13px]"><path d="M1 1h9l3 3v11H1z" fill="#c8ccd0" stroke="#555" /><path d="M6 4.500C2 4.500 2 12 6 12" stroke="#2f5596" strokeWidth="1.600" fill="none" /><path d="M8.200 6v5M10.500 6v5M6.800 7.500h5M6.800 9.800h5" stroke="#2f5596" strokeWidth=".9" /></svg>
            GameController
          </div>
          <div className="mt-auto flex h-[17px] items-center justify-end border-t border-[#777] bg-[#a8a8a8] pr-4">
            <i className="size-[10px] rounded-full border border-[#444] bg-[#b0b0b0]" /><i className="h-[3px] w-[46px] rounded-r bg-[#666]" />
          </div>
        </div>
      </div>
    </section>
  );
}

function Inspector() {
  return (
    <section className="ml-[2px] flex flex-1 flex-col">
      <div className="flex h-4 shrink-0 items-end">
        <div className={`${tab} w-[99px] pl-[9px]`}>
          <svg viewBox="0 0 10 10" className="mr-[5px] size-[10px]"><circle cx="5" cy="5" r="5" fill="#2b2b2b" /><path d="M5 2v1.500M4 4.500h1.300V8M3.800 8h2.600" stroke="#ccc" strokeWidth="1.200" fill="none" /></svg>Inspector
        </div>
        <span className="-mb-px ml-2">Services</span>
        <div className="mr-[5px] ml-auto flex items-center gap-[6px]"><Lock /><Menu /></div>
      </div>
      <div className="flex-1 border-t border-b border-l border-[#686868] bg-[#9b9b9b]" />
    </section>
  );
}

/* ---------- taskbar ---------- */

function Slot({ children, open, active }: { children: React.ReactNode; open?: boolean; active?: boolean }) {
  return (
    <div className={`flex h-10 w-[49px] shrink-0 flex-col items-center ${active ? "bg-[#545454]" : ""}`}>
      <div className="flex h-[37px] items-center pt-[3px]">{children}</div>
      <div className={`h-[3px] ${open ? "bg-[#b5473a]" : ""} ${active ? "w-full" : "w-10"}`} />
    </div>
  );
}

function Taskbar() {
  return (
    <footer className="flex h-10 shrink-0 items-center bg-[#0a0b0d] font-['Open_Sans','Noto_Sans',sans-serif] text-[12px] tracking-normal text-[#eee]">
      <Slot><FaWindows className="size-[17px] text-white" /></Slot>
      <div className="w-px" />
      <Slot open>
        <svg viewBox="0 0 24 24" className="size-6"><path d="M1 2h8l2 2h12v17H1z" fill="#f7dc8c" /><path d="M1 2h8l2 2H3v17H1z" fill="#e5bf62" /><path d="M5 12h14v10h-4v-5H9v5H5z" fill="#4384e4" /></svg>
      </Slot>
      <Slot open>
        <svg viewBox="0 0 24 24" className="size-[23px]"><circle cx="12" cy="12" r="11.500" fill="#f6dc8a" /><path d="M12 12L2 6.200A11.500 11.500 0 0 1 22.200 7H12z" fill="#b5473a" /><path d="M2 6.200L7.500 15l4 1.500L8.500 23A11.500 11.500 0 0 1 2 6.200z" fill="#65706c" /><circle cx="12" cy="12" r="5.500" fill="#eee" /><circle cx="12" cy="12" r="4.300" fill="#3f7de6" /></svg>
      </Slot>
      <Slot>
        <svg viewBox="0 0 26 26" className="size-[25px]"><path d="M17.500 3A11 11 0 1 0 23 8.500" fill="none" stroke="#fff" strokeWidth="2.500" /><circle cx="13" cy="13" r="3.700" fill="none" stroke="#fff" strokeWidth="3" /><path d="M15.500 10l5.500-6.500" stroke="#fff" strokeWidth="2.200" /></svg>
      </Slot>
      <Slot><FaSpotify className="size-6 text-[#858585]" /></Slot>
      <Slot>
        <svg viewBox="0 0 20 24" className="h-6 w-5"><path d="M2 0h16a2 2 0 0 1 2 2v22l-5-4H2a2 2 0 0 1-2-2V2a2 2 0 0 1 2-2z" fill="#4c7cc6" /><g transform="translate(2.500 3) scale(.0235)"><FaDiscord size={640} color="#fff" /></g></svg>
      </Slot>
      <Slot>
        <svg viewBox="0 0 20 20" className="size-5"><rect x="1.500" y="1.500" width="17" height="17" rx="5" fill="#fff" transform="rotate(-14 10 10)" /><path d="M7 5l1.500 10M11.500 4.500l1.500 10M4.800 8.500l10-1.500M5.300 12.800l10-1.500" stroke="#111" strokeWidth="1.900" /></svg>
      </Slot>
      <Slot>
        <svg viewBox="0 0 20 24" className="h-6 w-5"><ellipse cx="10" cy="12" rx="10" ry="11.500" fill="#3f7de6" /><circle cx="10" cy="10.500" r="3.200" fill="#3f7de6" stroke="#fff" strokeWidth="2.600" /><path d="M10 13v6" stroke="#fff" strokeWidth="3" /></svg>
      </Slot>
      <Slot open>
        <svg viewBox="0 0 26 28" className="h-7 w-[26px]"><path d="M18 0l7 3v20l-7 4-15-5 15 1z" fill="#5582bd" /><path d="M3 8v9l3-2.500 8 7V5L6 11z" fill="none" stroke="#5582bd" strokeWidth="2.500" transform="translate(0 2) scale(.9 .8)" /></svg>
      </Slot>
      <Slot>
        <div className="flex w-[18px] flex-col items-center font-['Open_Sans',sans-serif] leading-none text-white">
          <span className="scale-x-[0.65] text-[12px] font-bold">EPIC</span>
          <span className="mt-px scale-x-90 text-[4.5px] font-bold">GAMES</span>
          <svg viewBox="0 0 8 3" className="mt-[2px] h-[3px] w-2"><path d="M0 0h8L4 2.500z" fill="#ddd" /></svg>
        </div>
      </Slot>
      <Slot><div className="flex size-5 items-center justify-center bg-white"><Unity className="size-[14px] text-[#222]" /></div></Slot>
      <Slot open active><Unity className="size-[22px] text-white" /></Slot>
      <div className="ml-auto flex h-full items-center">
        <svg viewBox="0 0 12 8" className="h-2 w-3"><path d="M.5 7L6 1.500 11.500 7" fill="none" stroke="#fff" strokeWidth="1.300" /></svg>
        <svg viewBox="0 0 16 12" className="ml-[18px] h-3 w-4"><path d="M4 11.500A3.500 3.500 0 0 1 3 4.800 5 5 0 0 1 12.500 4 3.700 3.700 0 0 1 12.500 11.500z" fill="#fff" /><path d="M8 10V5M5.800 7.200L8 5l2.200 2.200" stroke="#111" strokeWidth="1.500" fill="none" /></svg>
        <svg viewBox="0 0 14 14" className="ml-[18px] size-[14px]"><circle cx="11.500" cy="11.500" r="1.500" fill="#fff" /><path d="M1 12.500A11.500 11.500 0 0 1 12.500 1M4 12.500A8.500 8.500 0 0 1 12.500 4M7 12.500A5.500 5.500 0 0 1 12.500 7" fill="none" stroke="#ddd" strokeWidth="1.200" /></svg>
        <svg viewBox="0 0 17 14" className="ml-[15px] h-[14px] w-[17px]"><path d="M.6 4.500h2.500L6.500 1.500v11L3.100 9.500H.6z" fill="none" stroke="#fff" strokeWidth="1.100" /><path d="M9 4.500c1 1.500 1 3.500 0 5" fill="none" stroke="#fff" /><path d="M11.500 3c1.800 2.500 1.800 5.500 0 8M14 1.500c2.600 3.300 2.600 7.700 0 11" fill="none" stroke="#666" /></svg>
        <svg viewBox="0 0 17 12" className="ml-[15px] h-3 w-[17px]"><path d="M1.500 0v2.500M4.500 0v2.500M0 2.500h6v2.500H4v3M2 5v7" fill="none" stroke="#fff" /><path d="M6 3.500h9v7H4.500v-2" fill="none" stroke="#fff" /><path d="M7.500 5h6v4h-7z" fill="#fff" /><path d="M16 5.500v3" stroke="#fff" /></svg>
        <span className="ml-[14px] w-6 tracking-[-0.5px]">ENG</span>
        <div className="ml-[10px] w-[62px] text-center leading-[18px] tracking-[-0.45px]"><div>8:38 PM</div><div>8/08/2018</div></div>
        <svg viewBox="0 0 18 17" className="ml-[16px] h-[17px] w-[18px]"><path d="M1 1h15.500v11H11l-2.500 3L6 12H1z" fill="none" stroke="#fff" strokeWidth="1.200" /></svg>
        <div className="mr-1 ml-[18px] h-full w-px bg-[#555]" />
      </div>
    </footer>
  );
}

export default function App() {
  return (
    <div className="flex h-[768px] w-[1366px] flex-col overflow-hidden bg-[#828282] font-['DejaVu_Sans',sans-serif] text-[11px] leading-[16px] tracking-[0.2px] text-[#111]">
      <TopBars />
      <main className="flex h-[630px] shrink-0">
        <div className="flex w-[640px] shrink-0 flex-col"><SceneView /><GameView /></div>
        <div className="ml-[2px] flex w-[330px] shrink-0 flex-col"><Hierarchy /><Project /></div>
        <Inspector />
      </main>
      <div className="h-[22px] shrink-0" />
      <Taskbar />
    </div>
  );
}
